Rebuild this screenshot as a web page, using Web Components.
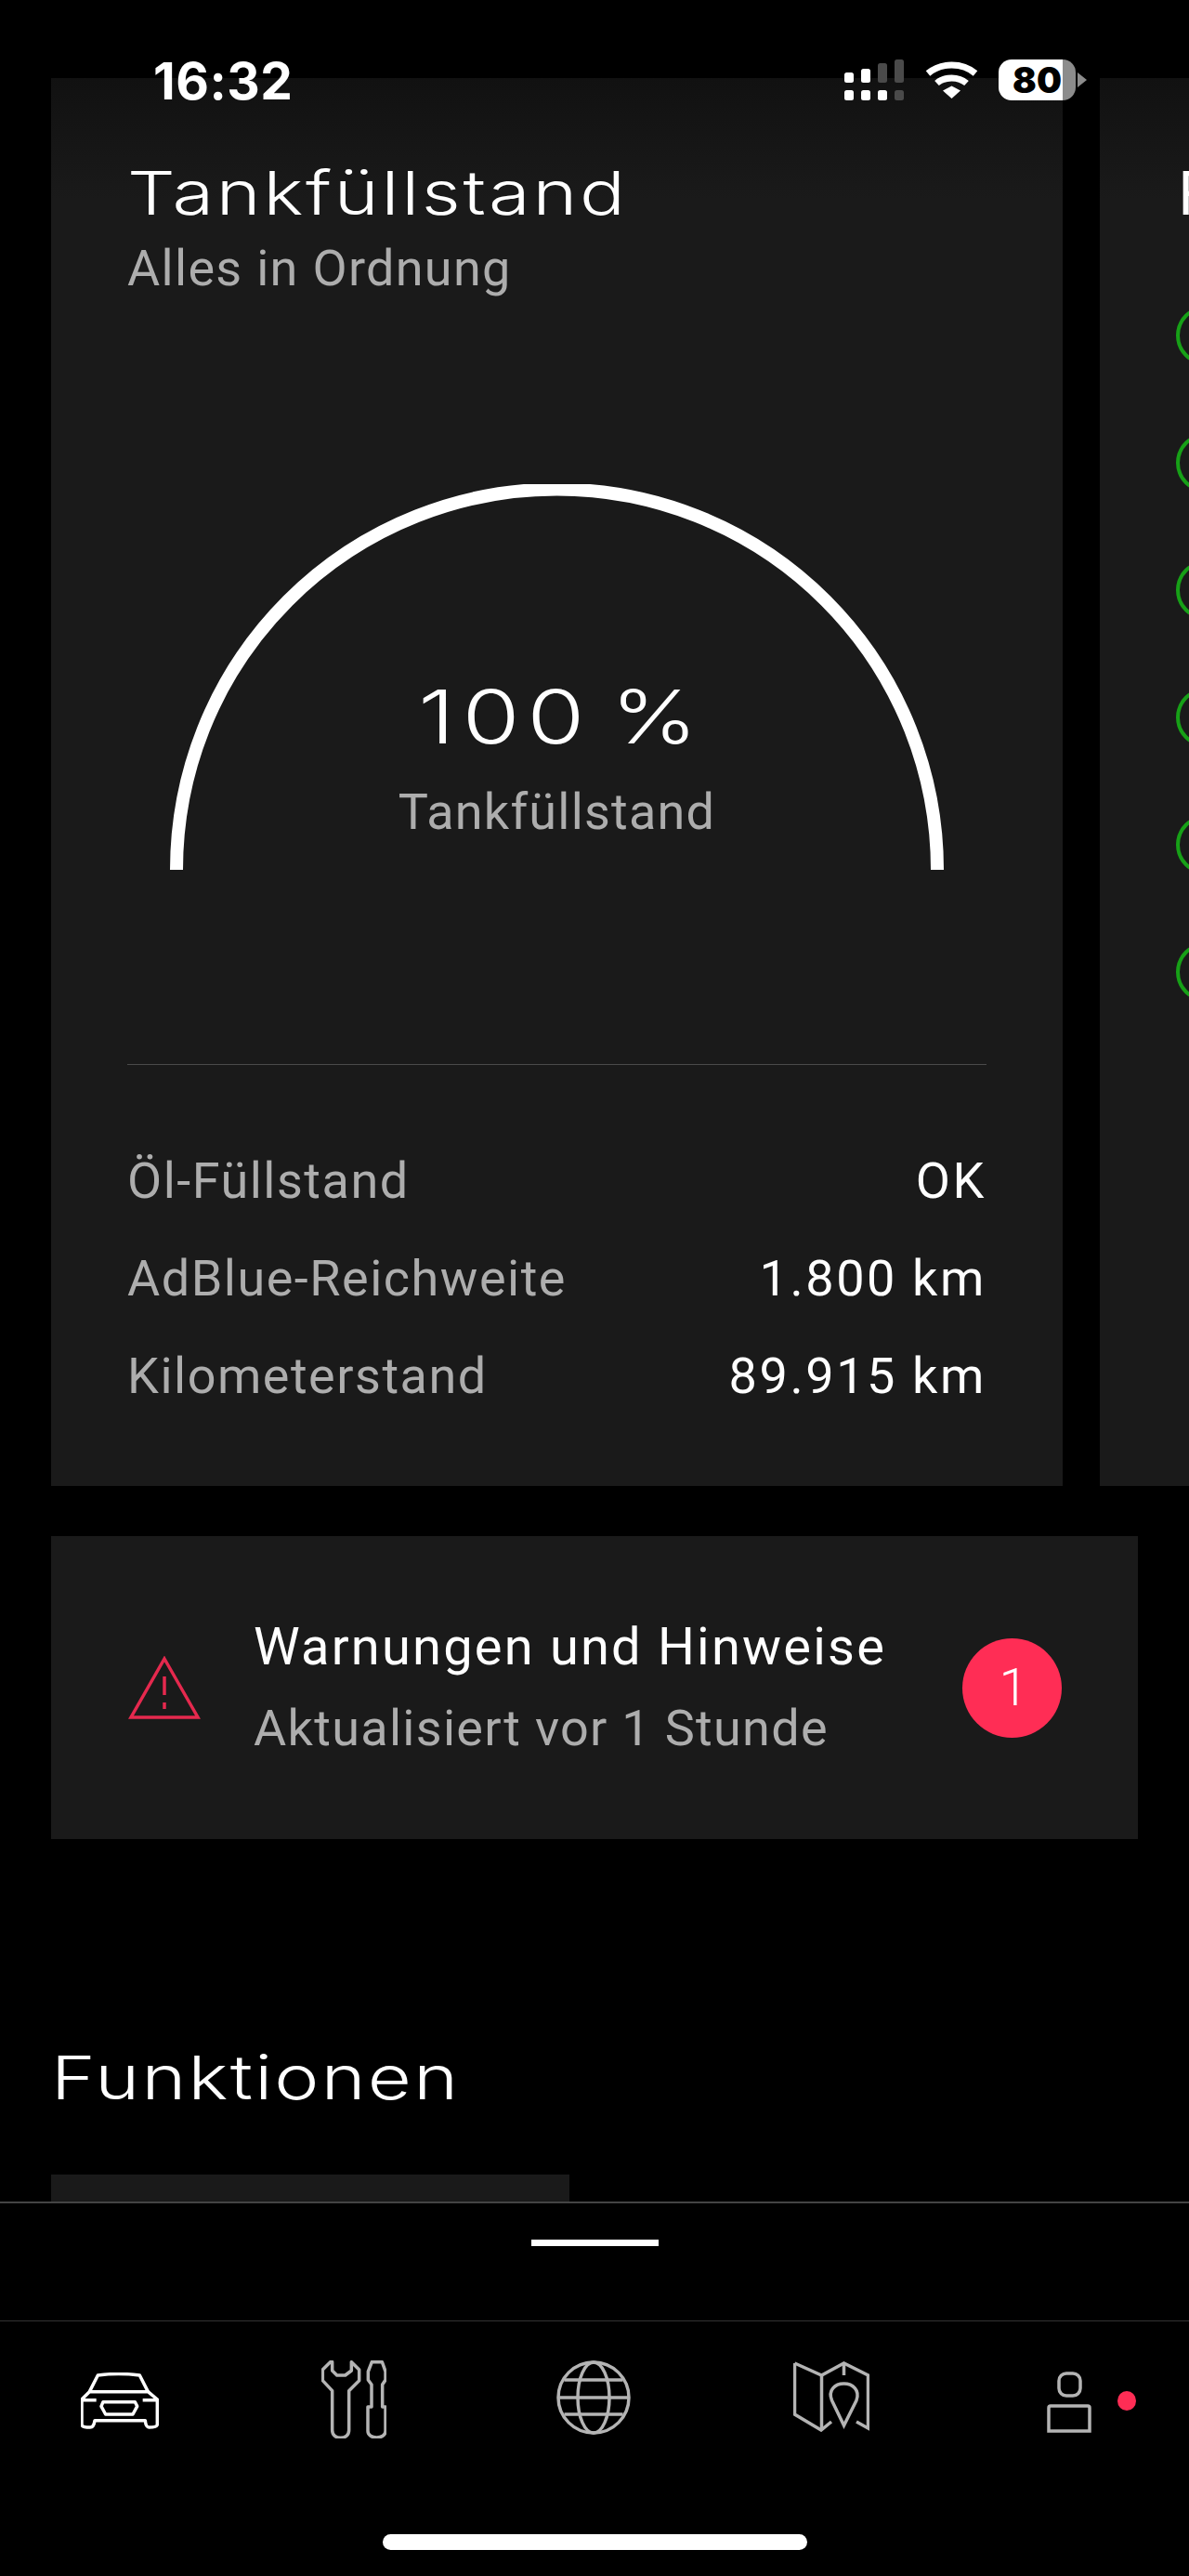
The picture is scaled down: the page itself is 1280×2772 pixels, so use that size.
<!DOCTYPE html>
<html lang="de">
<head>
<meta charset="utf-8">
<title>Tankfüllstand</title>
<style>
    html, body { margin: 0; background: #000; }
    body { font-family: "Roboto", "Noto Sans", sans-serif; color: #fff; }
</style>
</head>
<body>
<app-shell>
    <status-bar slot="status" time="16:32" battery="80"></status-bar>
    <tank-card>
        <info-row label="Öl-Füllstand" value="OK"></info-row>
        <info-row label="AdBlue-Reichweite" value="1.800 km"></info-row>
        <info-row label="Kilometerstand" value="89.915 km"></info-row>
    </tank-card>
    <check-card slot="next" title-text="F"></check-card>
    <warn-card slot="warn" count="1"></warn-card>
    <section-head slot="section">Funktionen</section-head>
    <tab-bar slot="tabs"></tab-bar>
</app-shell>

<script>
const TITLE_FONT = `font-family: "Inter", sans-serif; font-weight: 300; letter-spacing: 2.200px;`;

class AppShell extends HTMLElement {
    constructor() {
        super();
        this.attachShadow({ mode: "open" });
        this.shadowRoot.innerHTML = `
        <style>
            :host { display: block; position: relative; width: 1280px; height: 2772px; overflow: hidden; background: #000; }
            main { height: 2369px; padding-top: 84px; box-sizing: border-box; overflow: hidden; }
            .carousel { display: flex; gap: 40px; padding-left: 55px; overflow: hidden; }
            .stub { width: 558px; height: 60px; margin-left: 55px; background: #1a1a1a; }
            .status { position: absolute; left: 0; top: 0; width: 100%; }
        </style>
        <main>
            <div class="carousel"><slot></slot><slot name="next"></slot></div>
            <slot name="warn"></slot>
            <slot name="section"></slot>
            <div class="stub"></div>
        </main>
        <slot name="tabs"></slot>
        <div class="status"><slot name="status"></slot></div>
        `;
    }
}

class StatusBar extends HTMLElement {
    constructor() {
        super();
        this.attachShadow({ mode: "open" });
        let time = this.getAttribute("time");
        let battery = this.getAttribute("battery");
        this.shadowRoot.innerHTML = `
        <style>
            :host { display: flex; align-items: flex-start; height: 120px; padding: 0 110px 0 165px; box-sizing: border-box; justify-content: space-between; }
            .time { font: 700 55px/1 "Inter", sans-serif; margin-top: 60px; letter-spacing: 0.500px; color: #fff; }
            .icons { display: flex; align-items: flex-start; margin-top: 64px; }
            svg { display: block; }
            .signal { margin-right: 23px; }
            .wifi { margin-top: 2px; margin-right: 22px; }
            .battery { width: 83px; height: 44px; border-radius: 14px; background: linear-gradient(90deg, #fff 0 69px, #8c8c8c 69px); color: #000; display: flex; align-items: center; justify-content: center; font: 900 38px/44px "Inter", sans-serif; letter-spacing: 0; }
            .cap { width: 10px; height: 16px; margin: 14px 0 0 2px; background: #8c8c8c; clip-path: polygon(0 0, 100% 50%, 0 100%); }
        </style>
        <div class="time">${time}</div>
        <div class="icons">
            <svg class="signal" width="64" height="44" viewBox="0 0 64 44" fill="#fff">
                <rect x="0" y="14" width="10" height="11" rx="2.5"/>
                <rect x="0" y="33" width="10" height="11" rx="2.5"/>
                <rect x="18" y="10" width="10" height="15" rx="2.5"/>
                <rect x="18" y="33" width="10" height="11" rx="2.5"/>
                <rect x="36" y="4" width="10" height="21" rx="2.5" fill="#4a4a4a"/>
                <rect x="36" y="33" width="10" height="11" rx="2.5"/>
                <rect x="54" y="0" width="10" height="25" rx="2.5" fill="#4a4a4a"/>
                <rect x="54" y="33" width="10" height="11" rx="2.5" fill="#4a4a4a"/>
            </svg>
            <svg class="wifi" width="57" height="40" viewBox="0 0 57 40" fill="none" stroke="#fff" stroke-width="7">
                <path d="M3 13C17 1 40 1 54 13"/>
                <path d="M12.500 23.500C21 16 36 16 44.500 23.500"/>
                <path d="M19 31.500L28.500 26.500L38 31.500L28.500 40Z" fill="#fff" stroke="none"/>
            </svg>
            <div class="battery">${battery}</div>
            <div class="cap"></div>
        </div>
        `;
    }
}

class TankCard extends HTMLElement {
    constructor() {
        super();
        this.attachShadow({ mode: "open" });
        this.shadowRoot.innerHTML = `
        <style>
            :host { display: block; flex: none; width: 1089px; height: 1515px; padding: 89px 82px 0; box-sizing: border-box; background: linear-gradient(#111 0, #1a1a1a 130px); }
            h2 { margin: 0; ${TITLE_FONT} font-size: 65px; line-height: 70px; color: #fff; display: inline-block; transform: scaleX(1.25); transform-origin: left; white-space: nowrap; }
            .sub { font-size: 54px; line-height: 62px; letter-spacing: 1.300px; color: #adadad; margin-top: 15px; }
            .gauge { display: grid; justify-items: center; margin-top: 201px; }
            .gauge > * { grid-area: 1 / 1; }
            svg { display: block; }
            .read { text-align: center; margin-top: 205px; }
            .pct { ${TITLE_FONT} letter-spacing: 6.500px; word-spacing: -13px; font-size: 80px; line-height: 90px; padding-left: 8px; color: #fff; transform: scaleX(1.25); }
            .lbl { font-size: 54px; line-height: 62px; letter-spacing: 1.200px; color: #adadad; margin-top: 27px; }
            hr { border: 0; height: 1px; background: #4a4a4a; margin: 208px 0 72px; }
        </style>
        <h2>Tankfüllstand</h2>
        <div class="sub">Alles in Ordnung</div>
        <div class="gauge">
            <svg width="834" height="416" viewBox="182 521 834 416" fill="none">
                <path d="M189 936A409.500 409.500 0 0 1 1008 936" stroke="#fff" stroke-width="14"/>
            </svg>
            <div class="read">
                <div class="pct">100 %</div>
                <div class="lbl">Tankfüllstand</div>
            </div>
        </div>
        <hr>
        <slot></slot>
        `;
    }
}

class InfoRow extends HTMLElement {
    constructor() {
        super();
        this.attachShadow({ mode: "open" });
        this.shadowRoot.innerHTML = `
        <style>
            :host { display: flex; justify-content: space-between; height: 105px; font-size: 54px; line-height: 105px; }
            .label { color: #adadad; letter-spacing: 1.500px; }
            .value { color: #fff; letter-spacing: 2.600px; }
        </style>
        <span class="label">${this.getAttribute("label")}</span>
        <span class="value">${this.getAttribute("value")}</span>
        `;
    }
}

class CheckCard extends HTMLElement {
    constructor() {
        super();
        this.attachShadow({ mode: "open" });
        let rings = [0, 1, 2, 3, 4, 5].map(() => `<span class="ring"></span>`).join("");
        this.shadowRoot.innerHTML = `
        <style>
            :host { display: block; flex: none; width: 1000px; height: 1515px; padding: 89px 0 0 84px; box-sizing: border-box; background: linear-gradient(#111 0, #1a1a1a 130px); }
            h2 { margin: 0; font: 400 65px/70px "Inter", sans-serif; color: #fff; }
            .list { display: flex; flex-direction: column; gap: 73px; margin: 86px 0 0 -2px; }
            .ring { display: block; width: 64px; height: 64px; box-sizing: border-box; border: 4px solid #17a017; border-radius: 50%; }
        </style>
        <h2>${this.getAttribute("title-text")}</h2>
        <div class="list">${rings}</div>
        `;
    }
}

class WarnCard extends HTMLElement {
    constructor() {
        super();
        this.attachShadow({ mode: "open" });
        this.shadowRoot.innerHTML = `
        <style>
            :host { display: flex; align-items: center; width: 1170px; height: 326px; margin: 54px 0 0 55px; padding: 0 82px 0 83px; box-sizing: border-box; background: #1a1a1a; }
            svg { display: block; flex: none; }
            .text { flex: 1; margin-left: 57px; padding-top: 4px; }
            .title { font-size: 56px; line-height: 62px; letter-spacing: 2.200px; color: #fff; margin-top: -4px; }
            .sub { font-size: 54px; line-height: 62px; letter-spacing: 1.300px; color: #adadad; margin-top: 26px; }
            .badge { flex: none; width: 107px; height: 107px; padding-left: 3px; box-sizing: border-box; border-radius: 50%; background: #ff2d55; color: #fff; font-size: 56px; font-weight: 300; display: flex; align-items: center; justify-content: center; }
        </style>
        <svg width="78" height="68" viewBox="0 0 78 68" fill="none" stroke="#e5294e" stroke-width="3.500">
            <path d="M39 3L75 66H3Z"/>
            <path d="M39 22V42"/>
            <path d="M39 50V57"/>
        </svg>
        <div class="text">
            <div class="title">Warnungen und Hinweise</div>
            <div class="sub">Aktualisiert vor 1 Stunde</div>
        </div>
        <div class="badge">${this.getAttribute("count")}</div>
        `;
    }
}

class SectionHead extends HTMLElement {
    constructor() {
        super();
        this.attachShadow({ mode: "open" });
        this.shadowRoot.innerHTML = `
        <style>
            :host { display: block; height: 70px; margin: 222px 0 69px 55px; ${TITLE_FONT} letter-spacing: 1.800px; font-size: 65px; line-height: 70px; color: #fff; white-space: nowrap; transform: scaleX(1.25); transform-origin: left; }
        </style>
        <slot></slot>
        `;
    }
}

class TabBar extends HTMLElement {
    constructor() {
        super();
        this.attachShadow({ mode: "open" });
        this.shadowRoot.innerHTML = `
        <style>
            :host { display: block; height: 403px; border-top: 2px solid #444; box-sizing: border-box; background: #000; }
            .pager { display: flex; justify-content: center; height: 127px; border-bottom: 1px solid #333; box-sizing: border-box; }
            .pager span { width: 137px; height: 7px; margin-top: 39px; background: #fff; }
            .tabs { display: flex; align-items: flex-start; height: 229px; padding-left: 87px; box-sizing: border-box; }
            svg { display: block; flex: none; fill: none; stroke: #b4b4b4; stroke-width: 3.500; }
            .car { stroke: #fff; margin: 55px 0 0 0; }
            .tools { margin: 42px 0 0 175px; }
            .globe { margin: 42px 0 0 183px; }
            .map { margin: 42px 0 0 175px; }
            .person { margin: 54px 0 0 191px; }
            .dot { flex: none; width: 20px; height: 21px; margin: 75px 0 0 28px; border-radius: 50%; background: #ff2d55; }
            .home { width: 457px; height: 17px; margin: 0 auto; border-radius: 9px; background: #fff; }
        </style>
        <div class="pager"><span></span></div>
        <div class="tabs">
            <svg class="car" width="84" height="62" viewBox="80 103 252 186" stroke-linejoin="round" style="stroke-width:10.500">
                <path d="M108 165L135 112Q202 103 270 112L297 165"/>
                <path d="M108 165H297L327 190V272Q325 280 300 280Q290 280 288 258H125Q122 280 110 280Q85 280 83 272V190Z"/>
                <path d="M85 192H130M280 192H325"/>
                <path d="M152 198H255L262 212L248 238H160L146 212Z"/>
            </svg>
            <svg class="tools" width="70" height="84" viewBox="858 62 210 252" style="stroke-width:10.500" stroke-linejoin="round">
                <path d="M887 67L862 92V127L893 160V288C893 320 947 320 947 288V160L980 127V92L955 67V95L935 110H908L893 95V67Z"/>
                <path d="M1021 67H1054L1065 98V125L1055 140V212H1065V290C1065 318 1008 318 1008 290V212H1020V140L1009 125V98Z"/>
            </svg>
            <svg class="globe" width="80" height="80" viewBox="598.500 541 80 80">
                <circle cx="638.500" cy="581" r="38"/>
                <ellipse cx="638.500" cy="581" rx="17" ry="38"/>
                <path d="M607 562H670M600 581H677M607 599H670"/>
            </svg>
            <svg class="map" width="82" height="77" viewBox="854 542 82 77" stroke-linejoin="miter">
                <path d="M855.500 545V600L884 617L895 608"/>
                <path d="M855.500 545L884.500 558L908.500 545L934.500 558V615L922 608"/>
                <path d="M884.500 558V617M908.500 545V558"/>
                <path d="M908.500 612L895.500 585C891 574 899 567 908.500 567C918 567 926 574 922 585Z"/>
            </svg>
            <svg class="person" width="48" height="66" viewBox="1127 553 48 66">
                <rect x="1140" y="555" width="23" height="24" rx="8"/>
                <path d="M1129 617V592Q1129 590 1131 590H1171Q1173 590 1173 592V617Z"/>
            </svg>
            <span class="dot"></span>
        </div>
        <div class="home"></div>
        `;
    }
}

customElements.define("app-shell", AppShell);
customElements.define("status-bar", StatusBar);
customElements.define("tank-card", TankCard);
customElements.define("info-row", InfoRow);
customElements.define("check-card", CheckCard);
customElements.define("warn-card", WarnCard);
customElements.define("section-head", SectionHead);
customElements.define("tab-bar", TabBar);
</script>
</body>
</html>
